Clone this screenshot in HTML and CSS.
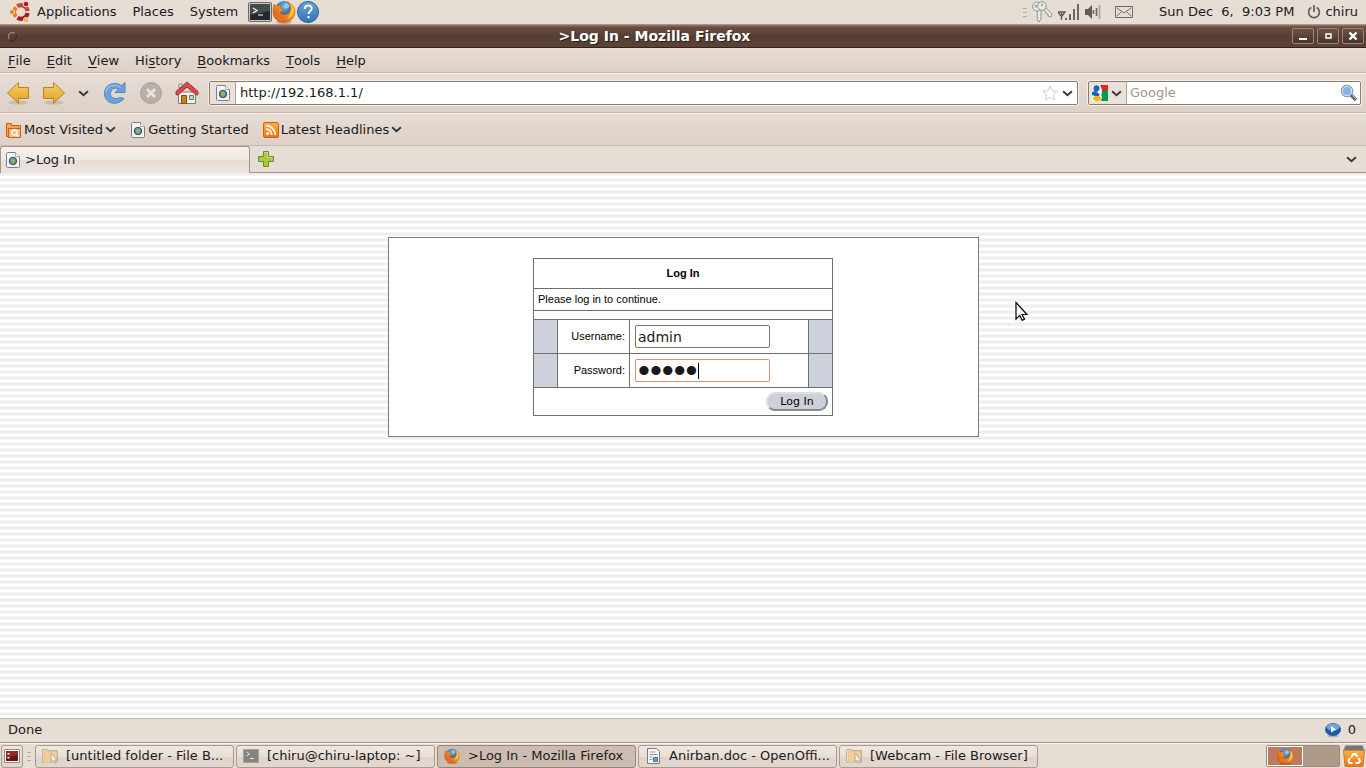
FILE: index.html
```html
<!DOCTYPE html>
<html lang="en">
<head>
<meta charset="utf-8">
<title>&gt;Log In - Mozilla Firefox</title>
<meta name="viewport" content="width=device-width, initial-scale=1">
<link rel="stylesheet" href="styles.css">
</head>
<body>
<svg class="defs" aria-hidden="true">
  <defs>
    <linearGradient id="gold" x1="0" y1="0" x2="0" y2="1"><stop offset="0" stop-color="#f8cf66"/><stop offset="1" stop-color="#dea02a"/></linearGradient>
    <linearGradient id="orange" x1="0" y1="0" x2="0" y2="1"><stop offset="0" stop-color="#ffb04a"/><stop offset="1" stop-color="#ee7410"/></linearGradient>
    <linearGradient id="fox" x1="0" y1="1" x2="1" y2="0"><stop offset="0" stop-color="#d9421a"/><stop offset=".5" stop-color="#f08a1c"/><stop offset="1" stop-color="#ffd23c"/></linearGradient>
    <linearGradient id="blue" x1="0" y1="0" x2="0" y2="1"><stop offset="0" stop-color="#69a3d6"/><stop offset="1" stop-color="#2f74b4"/></linearGradient>
    <radialGradient id="globe" cx=".5" cy=".3" r=".7"><stop offset="0" stop-color="#6fb8e8"/><stop offset="1" stop-color="#12357c"/></radialGradient>
  </defs>
  <symbol id="i-firefox" viewBox="0 0 24 24">
    <ellipse cx="12" cy="22" rx="8" ry="2" fill="#000" opacity=".2"/>
    <circle cx="12" cy="10" r="9" fill="url(#globe)"/>
    <path d="M13 3c3 0 5 2 4 4l-3 2-2-2z" fill="#a6dcf5" opacity=".7"/>
    <path d="M2 4c1 1 1.500 1.500 3 2 1.500-1 3-1 4 0-1.500 1-1 2 0 2.500 1.500.5 2.500.5 2 1.500-.5 1.200-2 1-2.500 2.500 1 2.500 4.500 2.500 7 1.500 3-1.500 3.500-5 2.500-8-.3-1.500-1-2.500-2-3.500 4 1 7 5 7 9.500 0 6-5 10.500-11 10.500S1 18 1 12c0-3 .2-5.500 1-8z" fill="url(#fox)" stroke="#c9500f" stroke-width=".5"/>
    <path d="M20 6c2 5 1 11-5 13 3-3 5-7 5-13z" fill="#ffe15a" opacity=".85"/>
    <path d="M3 12c1 5 5 8 9 8-4 1-8-1-9-8z" fill="#f9b23d" opacity=".6"/>
  </symbol>
  <symbol id="i-page" viewBox="0 0 16 16">
    <path d="M1.500 1.500a1 1 0 0 1 1-1h8l4 4v10a1 1 0 0 1-1 1h-11a1 1 0 0 1-1-1z" fill="#f4f4f2" stroke="#7d7f7c"/>
    <path d="M10.500.5v4h4" fill="#fff" stroke="#a5a6a4"/>
    <circle cx="8" cy="9" r="3.700" fill="#4d7fb8" stroke="#2e4f86"/>
    <path d="M5.500 8l2-2 2 1 1 2-2 3-2-1z" fill="#96b646"/>
  </symbol>
  <symbol id="i-chev" viewBox="0 0 10 6"><path d="M1 1l4 3.500L9 1" fill="none" stroke="#3c3733" stroke-width="1.800"/></symbol>
  <symbol id="i-term" viewBox="0 0 24 20">
    <rect x=".5" y=".5" width="23" height="19" rx="1.500" fill="#c6c6c4" stroke="#6b6b69"/>
    <rect x="2" y="2" width="20" height="16" fill="#22282b"/><path d="M2 2h20v7L2 13z" fill="#444b4e"/>
    <path d="M5 6l4 2.500L5 11M10 13h5" fill="none" stroke="#fff" stroke-width="1.200"/>
  </symbol>
  <symbol id="i-folder" viewBox="0 0 16 16">
    <path d="M.5 14.500v-13h5l1 1h9v12z" fill="#eddcb8" stroke="#c8b087"/>
    <path d="M2.500 14.500v-11h12v11z" fill="#f3cd94" stroke="#dcc6a0"/>
    <path d="M9 5v9l2-1.500 1.500 3 1.500-.8-1.300-2.700H15z" fill="#eee" stroke="#aaa49b" stroke-width=".9"/>
  </symbol>
</svg>

<header class="panel">
  <nav class="panel-menus" aria-label="Desktop">
    <svg class="ubuntu" viewBox="0 0 22 22" aria-hidden="true">
      <g fill="none" stroke-width="4.200">
        <path d="M8.300 5.300A6.500 6.500 0 0 1 18.500 10.200" stroke="#c8482c"/>
        <path d="M18.500 12A6.500 6.500 0 0 1 8.500 16.700" stroke="#a81c28"/>
        <path d="M7 15.500A6.500 6.500 0 0 1 7 6.500" stroke="#ee7b22"/>
      </g>
      <circle cx="3" cy="11" r="2.600" fill="#f08326" stroke="#e6ddd5"/>
      <circle cx="17" cy="3" r="2.800" fill="#b3142c" stroke="#e6ddd5"/>
      <circle cx="17" cy="19.200" r="2.700" fill="#f6b73a" stroke="#e6ddd5"/>
    </svg>
    <button type="button">Applications</button>
    <button type="button">Places</button>
    <button type="button">System</button>
  </nav>
  <div class="launchers">
    <button type="button" aria-label="Terminal"><svg width="24" height="20"><use href="#i-term"/></svg></button>
    <button type="button" aria-label="Firefox"><svg width="24" height="24"><use href="#i-firefox"/></svg></button>
    <button type="button" aria-label="Help"><svg width="24" height="24" viewBox="0 0 24 24"><circle cx="12" cy="12" r="10.500" fill="url(#blue)" stroke="#285f98"/><path d="M8.700 9c0-4.500 7-4.500 7-.5 0 2.800-3.200 2.700-3.200 5.500M12.500 16v2.200" fill="none" stroke="#fff" stroke-width="2"/></svg></button>
  </div>
  <div class="tray">
    <span class="grip"></span>
    <svg width="22" height="22" viewBox="0 0 22 22" aria-label="Keyring"><g stroke="#96958f" fill="#e9e9e5"><path d="M11 7l2-2 8 8-1 3-3-1v-2l-2 0v-2z"/><path d="M6 8h4v10l-2 3-2-2 1-2-1.500-2 1-1z"/><circle cx="6" cy="5.500" r="4.500"/><circle cx="11" cy="5" r="4.300"/></g><circle cx="5" cy="5" r="1.500" fill="#aaa"/><circle cx="11" cy="4" r="1.300" fill="#aaa"/></svg>
    <svg width="22" height="18" viewBox="0 0 22 18" aria-label="Signal"><path d="M0 9h7L4.500 12.500h-2zM3.500 9v8" fill="none" stroke="#5d5a57" stroke-width="1.300"/><path d="M8 15v2M12 11v6M16 6v11M20 1v16" stroke="#6a6764" stroke-width="2"/></svg>
    <svg class="volume" width="16" height="16" viewBox="0 0 16 16" aria-label="Volume"><path d="M0 5h3l4-4v14l-4-4H0z" fill="#5e5b58"/><path d="M8.500 6v4M11.500 4v8" stroke="#6a6764" stroke-width="1.600"/><path d="M14.500 1v14" stroke="#aaa39d" stroke-width="1.600"/></svg>
    <svg class="mail" width="18" height="12" viewBox="0 0 18 12" aria-label="Mail"><path d="M.5.500h17v11H.5zM2 2l7 5 7-5M2 10l4-4M16 10l-4-4" fill="none" stroke="#6b6864"/></svg>
    <time>Sun Dec&nbsp; 6,&nbsp; 9:03 PM</time>
    <button type="button" class="session"><svg width="14" height="14" viewBox="0 0 14 14" aria-hidden="true"><path d="M4.300 2.500a5.400 5.400 0 1 0 5.400 0M7 0v7" fill="none" stroke="#5e5b58" stroke-width="1.600"/></svg>chiru</button>
  </div>
</header>

<div class="titlebar">
  <button type="button" class="win-menu" aria-label="Window menu"></button>
  <h1>&gt;Log In - Mozilla Firefox</h1>
  <div class="win-buttons">
    <button type="button" aria-label="Minimize"><svg viewBox="0 0 20 14"><path d="M6 10h8" stroke="#fff" stroke-width="2"/></svg></button>
    <button type="button" aria-label="Maximize"><svg viewBox="0 0 20 14"><path d="M8 5h5v4H8z" fill="none" stroke="#fff" stroke-width="1.500"/></svg></button>
    <button type="button" aria-label="Close"><svg viewBox="0 0 20 14"><path d="M6.500 3.500l7 7M13.500 3.500l-7 7" stroke="#fff" stroke-width="2.400"/></svg></button>
  </div>
</div>

<nav class="menubar" aria-label="Browser">
  <button type="button"><u>F</u>ile</button>
  <button type="button"><u>E</u>dit</button>
  <button type="button"><u>V</u>iew</button>
  <button type="button">Hi<u>s</u>tory</button>
  <button type="button"><u>B</u>ookmarks</button>
  <button type="button"><u>T</u>ools</button>
  <button type="button"><u>H</u>elp</button>
</nav>

<div class="toolbar">
  <div class="nav-buttons">
    <button type="button" aria-label="Back"><svg width="24" height="24" viewBox="0 0 24 24"><ellipse cx="12" cy="21.500" rx="10" ry="2" fill="#000" opacity=".1"/><path d="M1.500 12L12.500 1.500v5h10v11h-10v5z" fill="url(#gold)" stroke="#b9841a"/></svg></button>
    <button type="button" aria-label="Forward"><svg width="24" height="24" viewBox="0 0 24 24"><ellipse cx="12" cy="21.500" rx="10" ry="2" fill="#000" opacity=".1"/><path d="M22.500 12L11.500 1.500v5h-10v11h10v5z" fill="url(#gold)" stroke="#b9841a"/></svg></button>
    <button type="button" aria-label="History list" class="narrow"><svg width="11" height="7"><use href="#i-chev"/></svg></button>
    <button type="button" aria-label="Reload"><svg width="24" height="24" viewBox="0 0 24 24"><path d="M22 1.500v10H12l3.500-3.500C11 5.500 7.500 9 7.500 12.500c0 5 6 6.500 9.500 4l4 1C14 26 1.500 22.500 1.500 12.500 1.500 3 12 0 18.500 4.500z" fill="#6ba2d8" stroke="#4d86c2"/><path d="M3 11c1-6 8-9 14-5" stroke="#a8cdf0" fill="none"/></svg></button>
    <button type="button" aria-label="Stop" disabled><svg width="24" height="24" viewBox="0 0 24 24"><circle cx="12" cy="12" r="10.500" fill="#b9b0aa" stroke="#aaa19b"/><path d="M8 8l8 8M16 8l-8 8" stroke="#e9e4df" stroke-width="2.600"/></svg></button>
    <button type="button" aria-label="Home"><svg width="24" height="24" viewBox="0 0 24 24"><path d="M3.500 11h17v11.500h-17z" fill="#f3f2ee" stroke="#7f7c76"/><path d="M4 3h3v4H4z" fill="#eee" stroke="#888"/><path d="M1 13.500v-3L12 1l11 9.500v3l-2 .5-9-8-9 8z" fill="#d84c4c" stroke="#a22b2b"/><path d="M6.500 14.500h5v8h-5z" fill="#c98118" stroke="#80520d"/><path d="M14.500 14.500h4v4h-4z" fill="#b9d3e8" stroke="#66757f"/></svg></button>
  </div>
  <div class="field location">
    <span class="field-icon"><svg width="16" height="16"><use href="#i-page"/></svg></span>
    <input type="text" aria-label="Address" value="http://192.168.1.1/">
    <button type="button" aria-label="Bookmark this page"><svg width="16" height="16" viewBox="0 0 16 16"><path d="M8 1l2.100 4.800 5.200.5-3.900 3.500 1.100 5.200L8 12.300 3.500 15l1.100-5.200L.7 6.300l5.200-.5z" fill="#fff" stroke="#d2cfcc"/></svg></button>
    <button type="button" aria-label="Address history"><svg width="11" height="7"><use href="#i-chev"/></svg></button>
  </div>
  <div class="field search">
    <button type="button" class="engine" aria-label="Search engine"><svg width="16" height="16" viewBox="0 0 16 16"><path d="M0 0h16v16H0z" fill="#fff"/><path d="M8 0h8v5h-6z" fill="#ed2024"/><path d="M10 5h6v11H9l1-4-1-3z" fill="#0a9a48"/><ellipse cx="4.500" cy="3.500" rx="3" ry="3.300" fill="#1c63b7"/><path d="M0 7l3-1 5 3-2 3-6-2z" fill="#1c63b7"/><ellipse cx="5" cy="13.500" rx="4" ry="2.500" fill="#f5b400"/><path d="M6 5.500l4 1.500-1 3-3-2z" fill="#fff"/></svg><svg width="11" height="7"><use href="#i-chev"/></svg></button>
    <input type="text" aria-label="Search" placeholder="Google">
    <button type="button" aria-label="Search"><svg width="18" height="18" viewBox="0 0 18 18"><path d="M10.500 10.500l5.500 5.500" stroke="#6b6b6b" stroke-width="3.500"/><path d="M11 10l5 5" stroke="#b8b8b8"/><circle cx="7" cy="7" r="5.800" fill="#82b2e6" stroke="#8a8f94"/><circle cx="7" cy="7" r="4.700" fill="none" stroke="#dfe9f2"/></svg></button>
  </div>
</div>

<nav class="bookmarks" aria-label="Bookmarks">
  <a href="#visited"><svg width="16" height="16" viewBox="0 0 16 16"><path d="M.5 14.500V1.500h5v2h9v11z" fill="#f0a35b" stroke="#cb5f0e"/><path d="M2.500 15.500v-9h12v9z" fill="#f6b87c" stroke="#cb5f0e"/><circle cx="8.500" cy="10.500" r="2.500" fill="none" stroke="#fff" stroke-width="1.500"/><path d="M10 12l2.500 2.500" stroke="#fff" stroke-width="1.500"/></svg>Most Visited<svg class="drop" width="11" height="7"><use href="#i-chev"/></svg></a>
  <a href="#started"><svg width="16" height="16"><use href="#i-page"/></svg>Getting Started</a>
  <a href="#headlines"><svg width="16" height="16" viewBox="0 0 16 16"><rect x=".5" y=".5" width="15" height="15" rx="1.500" fill="url(#orange)" stroke="#d36408"/><circle cx="4.500" cy="11.500" r="1.600" fill="#fff"/><path d="M3 7.200a5.800 5.800 0 0 1 5.800 5.800M3 3.700a9.300 9.300 0 0 1 9.300 9.300" fill="none" stroke="#fff" stroke-width="1.700"/></svg>Latest Headlines<svg class="drop" width="11" height="7"><use href="#i-chev"/></svg></a>
</nav>

<div class="tabs">
  <button type="button" class="tab"><svg width="16" height="16"><use href="#i-page"/></svg>&gt;Log In</button>
  <button type="button" class="new-tab" aria-label="New tab"><svg width="16" height="16" viewBox="0 0 16 16"><path d="M5.500.5h5v5h5v5h-5v5h-5v-5h-5v-5h5z" fill="#a9c83c" stroke="#6d8a2c"/><path d="M6.500 1.500h3v5h5" fill="none" stroke="#cfe27f"/></svg></button>
  <button type="button" class="tab-list" aria-label="List all tabs"><svg width="11" height="7"><use href="#i-chev"/></svg></button>
</div>

<main class="page">
  <form class="card">
    <table class="login">
      <colgroup><col class="c-edge"><col class="c-label"><col><col class="c-edge"></colgroup>
      <tbody>
      <tr class="r-head"><th colspan="4">Log In</th></tr>
      <tr class="r-note"><td colspan="4">Please log in to continue.</td></tr>
      <tr class="r-gap"><td colspan="4"></td></tr>
      <tr class="r-field"><td class="edge"></td><td class="lbl"><label for="user">Username:</label></td><td class="val"><input id="user" type="text" value="admin"></td><td class="edge"></td></tr>
      <tr class="r-field"><td class="edge"></td><td class="lbl"><label for="pass">Password:</label></td><td class="val"><div class="secret"><input id="pass" type="password" value="admin"><span class="caret"></span></div></td><td class="edge"></td></tr>
      <tr class="r-foot"><td colspan="4"><button type="button">Log In</button></td></tr>
      </tbody>
    </table>
  </form>
</main>

<footer class="status"><span>Done</span><span class="count"><svg width="16" height="16" viewBox="0 0 16 16" aria-hidden="true"><ellipse cx="8" cy="14" rx="6" ry="1.500" fill="#000" opacity=".2"/><ellipse cx="8" cy="7.500" rx="8" ry="6.500" fill="#1d5ba8"/><ellipse cx="8" cy="5" rx="6.500" ry="3.500" fill="#6fa5dc"/><path d="M6 4l5 3.500-5 3z" fill="#fff"/></svg>0</span></footer>

<div class="taskbar">
  <button type="button" class="show-desktop" aria-label="Show desktop"><svg width="16" height="14" viewBox="0 0 16 14"><path d="M.5.500h15v13H.5z" fill="#fff" stroke="#8e8a86"/><path d="M2 2h12v10H2z" fill="#6a1710"/><path d="M2 2h12v4L2 9z" fill="#8d2f20"/><path d="M3.500 4h2v1.500h-2zM3.500 8h2v1.500h-2z" fill="#fff"/></svg></button>
  <span class="grip"></span>
  <div class="windows">
    <button type="button"><svg width="16" height="16"><use href="#i-folder"/></svg>[untitled folder - File B...</button>
    <button type="button"><svg width="16" height="14" viewBox="0 0 16 14"><rect x=".5" y=".5" width="15" height="13" fill="#858380" stroke="#a5a29f"/><path d="M3.500 3l3 2-3 2M7 9.500h4" fill="none" stroke="#e8e6e3"/></svg>[chiru@chiru-laptop: ~]</button>
    <button type="button" class="active"><svg width="16" height="16"><use href="#i-firefox"/></svg>&gt;Log In - Mozilla Firefox</button>
    <button type="button"><svg width="16" height="16" viewBox="0 0 16 16"><path d="M2.500.5h9l3 3v12h-12z" fill="#f7f7f5" stroke="#777c80"/><path d="M4.500 4h6M4.500 6.500h8M4.500 9h3M4.500 11.500h3" stroke="#8e969e"/><path d="M8.500 9.500h4v4h-4z" fill="#6c9ad0" stroke="#4a6f9e"/></svg>Anirban.doc - OpenOffi...</button>
    <button type="button"><svg width="16" height="16"><use href="#i-folder"/></svg>[Webcam - File Browser]</button>
  </div>
  <div class="workspaces">
    <button type="button" class="current" aria-label="Workspace 1"><svg width="17" height="17"><use href="#i-firefox"/></svg></button>
    <button type="button" aria-label="Workspace 2"></button>
  </div>
  <button type="button" class="trash" aria-label="Trash"><svg width="22" height="22" viewBox="0 0 22 22"><path d="M2.500.5h17l2 5H.5z" fill="#77756f" stroke="#a7a49f"/><path d="M.5 5.500h21l-1.500 16h-18z" fill="url(#orange)" stroke="#c98333"/><path d="M8 12.500l2.500-3.500h2l2 3M15.500 13l1.500 3-1.500 2h-3M9.500 18H6.500L5.500 15.500l1.500-2.500" fill="none" stroke="#fff" stroke-width="2"/></svg></button>
</div>

<svg class="pointer" width="13" height="20" viewBox="0 0 13 20" aria-hidden="true"><path d="M1 1.500v16.500l3.700-3.600 2.500 4.900 2.300-1.100-2.400-4.700h4.900z" fill="#fff" stroke="#000" stroke-width="1.200"/></svg>
</body>
</html>
```

FILE: styles.css
```css
* { box-sizing: border-box; }

body {
  margin: 0;
  min-height: 100vh;
  display: flex;
  flex-direction: column;
  background: #e6ddd5;
  color: #1a1a1a;
  font: 13px/16px "DejaVu Sans", sans-serif;
}

button {
  padding: 0;
  border: 0;
  background: none;
  color: inherit;
  font: inherit;
  display: flex;
  align-items: center;
}

svg { display: block; flex: none; }
.defs { position: absolute; width: 0; height: 0; }

/* Desktop panel */
.panel {
  height: 25px;
  display: flex;
  align-items: center;
  border-bottom: 1px solid #a8968a;
  padding: 0 8px 0 9px;
}
.panel-menus { display: flex; gap: 16px; align-items: center; }
.ubuntu { width: 22px; height: 22px; margin-right: -10px; }
.launchers { display: flex; align-items: center; margin-left: 10px; }
.tray { display: flex; align-items: center; margin-left: auto; }
.tray .grip { margin-right: 4px; }
.tray svg + svg { margin-left: 5px; }
.tray .mail { margin-left: 14px; }
.tray time { margin-left: 26px; }
.session { margin-left: 13px; gap: 4px; }
.grip {
  width: 4px;
  height: 9px;
  background: repeating-linear-gradient(#b7aaa0 0 1px, transparent 1px 4px);
}

/* Window title */
.titlebar {
  height: 23px;
  display: flex;
  align-items: center;
  padding: 0 2px 0 8px;
  background: linear-gradient(#8a6a5b 0 1px, #6b4d41 2px, #553d33 55%, #5c4338);
  border-bottom: 1px solid #35231c;
  color: #fff;
}
.titlebar h1 {
  flex: 1;
  margin: 0;
  font-size: 14px;
  line-height: 16px;
  text-align: center;
  text-shadow: 1px 1px #2e1f18;
}
.win-menu { width: 9px; height: 9px; border: 1px solid #95796b; border-color: #a98e81 #3a2821 #3a2821 #a98e81; border-radius: 50%; }
.win-buttons { display: flex; gap: 3px; }
.win-buttons button {
  width: 22px;
  height: 16px;
  border: 1px solid #a08679;
  border-radius: 2px;
  background: linear-gradient(#6f5246, #49342b);
}
.win-buttons svg { width: 20px; height: 14px; }

/* Browser chrome */
.menubar, .toolbar, .bookmarks {
  display: flex;
  align-items: center;
  background: linear-gradient(#e6ddd5, #ddd0c7);
  border-bottom: 1px solid #c9b6aa;
}
.menubar { height: 25px; gap: 16px; padding: 1px 8px 0; }
.menubar u { text-underline-offset: 2px; }

.toolbar { height: 40px; padding: 0 5px 0 6px; border-top: 1px solid #f3ece6; }
.nav-buttons { display: flex; align-items: center; gap: 12px; margin-right: 10px; }
.nav-buttons .narrow { margin-right: 2px; }

.field {
  height: 24px;
  display: flex;
  align-items: center;
  background: #fff;
  border: 1px solid #8c7b6c;
  border-radius: 2px;
  box-shadow: 0 0 0 1px #f4efea;
}
.field input {
  flex: 1;
  min-width: 0;
  border: 0;
  padding: 0 4px;
  background: none;
  color: #1a1a1a;
  font: inherit;
  outline: 0;
}
.field input::placeholder { color: #a2978d; opacity: 1; }
.location { flex: 1; margin-right: 10px; padding-right: 4px; }
.location button + button { margin-left: 4px; }
.field-icon, .engine { height: 22px; background: #e9e1da; border-right: 1px solid #b3a294; }
.field-icon { width: 26px; display: flex; align-items: center; justify-content: center; }
.search { width: 273px; padding-right: 2px; }
.search input { padding: 0 3px; }
.engine { padding: 0 4px 0 3px; gap: 3px; }

.bookmarks { height: 33px; padding: 0 6px; gap: 14px; border-top: 1px solid #f3ece6; }
.bookmarks a { display: flex; align-items: center; gap: 2px; color: inherit; text-decoration: none; }

.tabs {
  height: 27px;
  display: flex;
  align-items: center;
  border-bottom: 1px solid #a89484;
}
.tab {
  width: 250px;
  height: 27px;
  align-self: flex-start;
  gap: 4px;
  padding: 0 4px;
  background: linear-gradient(#f5f1ed, #f0e9e4 50%, #e8ded7 51%, #ece4dd);
  border: 1px solid #a89484;
  border-bottom: 0;
  border-radius: 3px 3px 0 0;
}
.new-tab { margin-left: 8px; }
.tab-list { margin: 0 9px 0 auto; }

/* Router page */
.page {
  flex: 1;
  padding: 64px 16px;
  background: repeating-linear-gradient(#eee 0 2px, #f6f6f6 2px 3px, #fff 3px 5px, #f8f8f8 5px 6px);
}
.card {
  max-width: 591px;
  min-height: 200px;
  margin: 0 auto;
  padding: 20px;
  background: #fff;
  border: 1px solid #7b7b7b;
}
.login {
  width: 300px;
  margin: 0 auto;
  table-layout: fixed;
  border-collapse: collapse;
  font: 11px/14px "Liberation Sans", Arial, sans-serif;
  color: #000;
}
.login td, .login th { border: 1px solid #6f6f6f; padding: 0 4px; }
.login .r-head th, .login .r-note td, .login .lbl { padding-bottom: 2px; }
.c-edge { width: 24px; }
.c-label { width: 72px; }
.r-head { height: 30px; }
.r-note { height: 22px; }
.r-gap { height: 9px; }
.r-field { height: 34px; }
.r-foot { height: 28px; }
.login .edge { background: #ccd1db; padding: 0; }
.login .lbl { text-align: right; }
.login .val { padding: 0 5px; }
.login input {
  display: block;
  width: 135px;
  height: 23px;
  padding: 0 2px;
  border: 1px solid #857468;
  border-radius: 2px;
  background: #fff;
  color: #1a1a1a;
  font: 14px/16px "DejaVu Sans", sans-serif;
  outline: 0;
}
.secret { position: relative; width: 135px; }
.login .secret input { border-color: #d0907a; font: 34px/20px "Liberation Sans", Arial, sans-serif; }
.caret { position: absolute; left: 63px; top: 4px; width: 1px; height: 16px; background: #000; }
.r-foot button {
  width: 62px;
  height: 19px;
  margin-left: auto;
  justify-content: center;
  border: 2px solid;
  border-color: #dcdee2 #85888e #85888e #dcdee2;
  border-radius: 9px;
  background: #ccd1d9;
  font: 11px/14px "DejaVu Sans", sans-serif;
}

/* Status bar and task bar */
.status {
  height: 25px;
  display: flex;
  align-items: center;
  justify-content: space-between;
  padding: 0 10px 2px 8px;
  border-top: 1px solid #c9b6aa;
  border-bottom: 1px solid #a89484;
}
.count { display: flex; align-items: center; gap: 7px; }

.taskbar {
  height: 25px;
  display: flex;
  align-items: center;
  padding-left: 1px;
  border-top: 1px solid #f7f2ed;
}
.taskbar .grip { margin: 0 4px 0 4px; }
.show-desktop { width: 22px; }
.show-desktop, .windows button {
  height: 23px;
  justify-content: center;
  border: 1px solid #a89a8e;
  border-radius: 3px;
  background: linear-gradient(#eee7e1, #e8dfd8 50%, #dfd3ca 51%, #e3d8d0);
}
.windows { flex: 1; min-width: 0; display: flex; gap: 2px; }
.windows button {
  flex: 0 1 199px;
  gap: 8px;
  padding: 0 0 0 6px;
  justify-content: flex-start;
  white-space: nowrap;
}
.windows .active { background: #cdbcb0; border-color: #94847a; }
.workspaces { display: flex; height: 22px; background: #ad9a89; border: 1px solid #9a8778; border-radius: 2px; }
.workspaces button { width: 36px; height: 20px; justify-content: center; }
.workspaces .current { background: #bd7a5e; border: 1px solid #fff; }
.trash { margin: 0 1px 0 3px; }

.pointer { position: absolute; left: 1015px; top: 301px; }
```
